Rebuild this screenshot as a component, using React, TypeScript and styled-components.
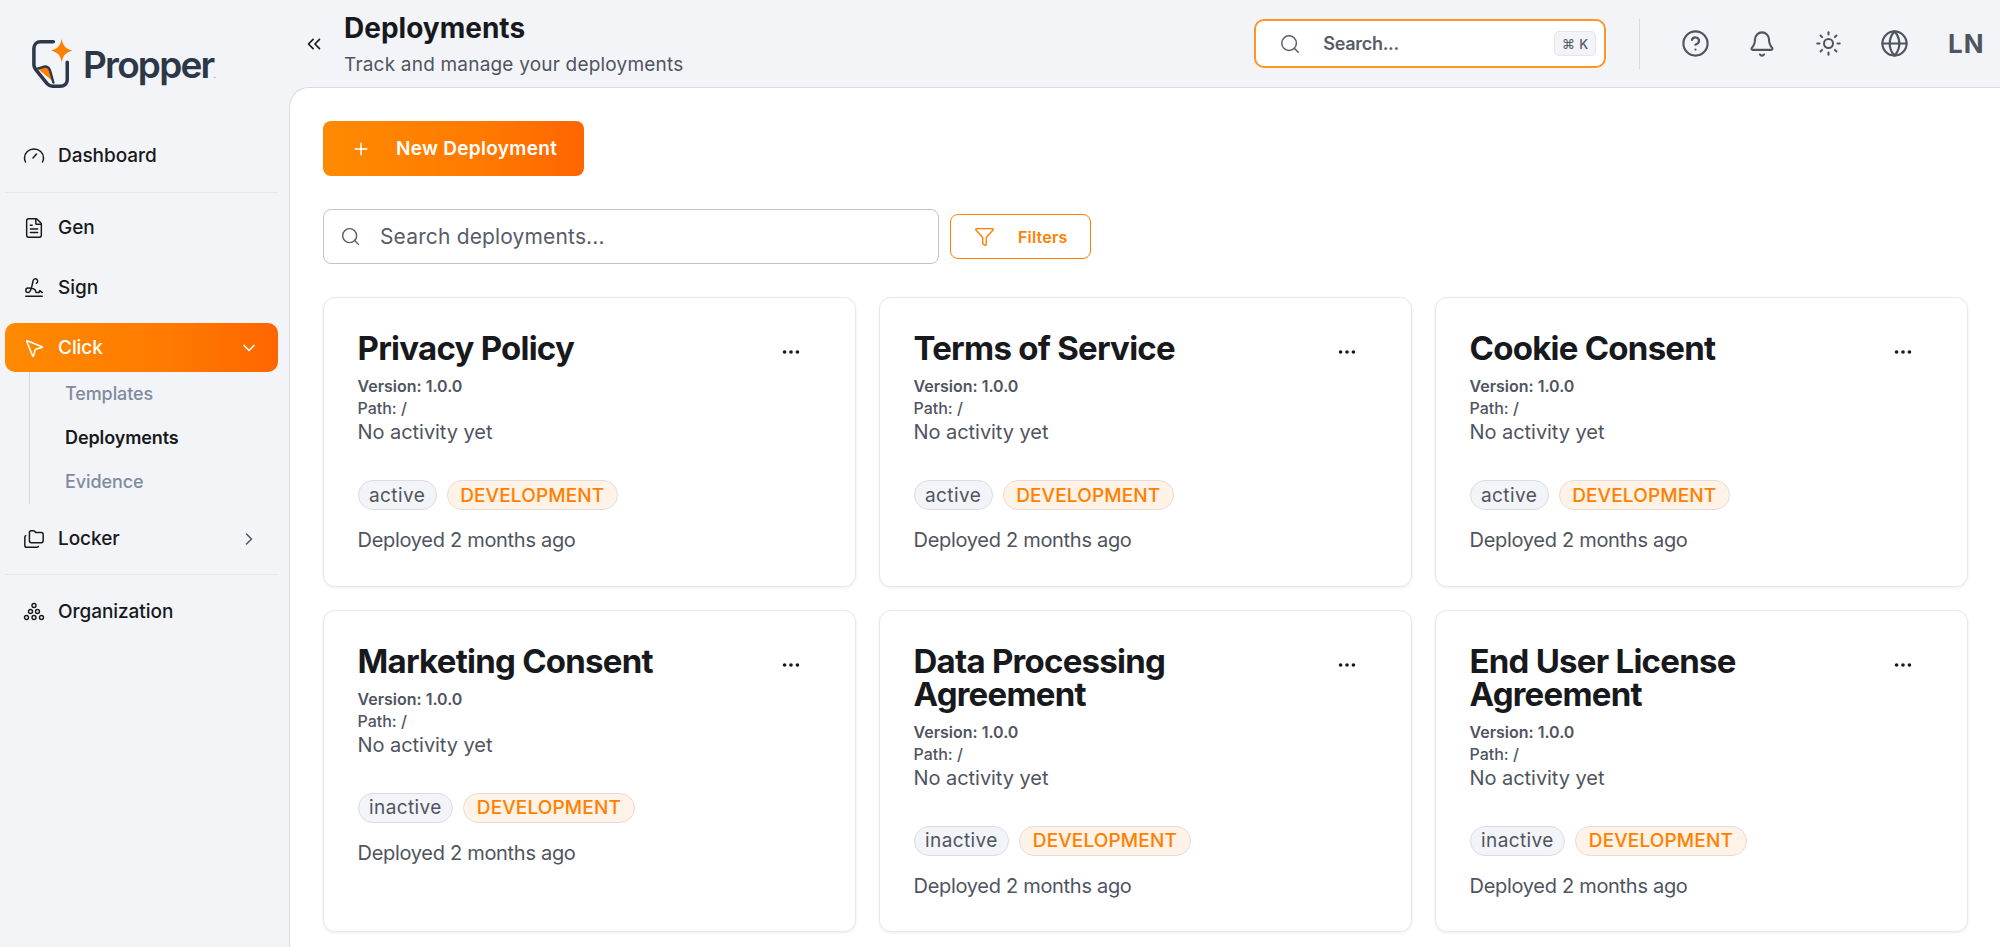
import * as React from "react";
import styled, { createGlobalStyle } from "styled-components";
import {
  Bell,
  ChevronDown,
  ChevronRight,
  ChevronsLeft,
  CircleHelp,
  Ellipsis,
  FileText,
  Folders,
  Funnel,
  Globe,
  MousePointer2,
  Plus,
  Search,
  Signature,
  Sun,
} from "lucide-react";

const ORANGE = "#ff7f00";
const INK = "#18191c";
const GREY = "#4f5461";
const FONT = `Inter, "Noto Sans", "Liberation Sans", sans-serif`;

const GlobalStyle = createGlobalStyle`
  html, body {
    margin: 0;
    height: 100%;
    background: #f2f4f8;
    font-family: ${FONT};
  }
  * { box-sizing: border-box; }
`;

const Shell = styled.div`
  display: grid;
  grid-template-columns: 289px 1fr;
  height: 947px;
  overflow: hidden;
  background: #f2f4f8;
`;

const Sidebar = styled.aside`
  display: flex;
  flex-direction: column;
  padding: 0 11px 0 5px;
`;

const LogoRow = styled.div`
  display: flex;
  align-items: center;
  height: 128px;
  padding-left: 26px;
  gap: 11px;
`;

const LogoText = styled.span`
  font-size: 37px;
  font-weight: 600;
  letter-spacing: -1.8px;
  color: #2c3848;
  small {
    font-size: 8px;
    color: #9aa1ad;
    letter-spacing: 0;
  }
`;

const NavItem = styled.div<{ $active?: boolean; $gap?: number }>`
  display: flex;
  align-items: center;
  height: 49px;
  padding: 0 19px 0 17px;
  margin-top: ${(p) => p.$gap ?? 0}px;
  border-radius: 10px;
  font-size: 19px;
  font-weight: 500;
  letter-spacing: -0.05px;
  color: ${(p) => (p.$active ? "#fff" : INK)};
  background: ${(p) =>
    p.$active ? "linear-gradient(90deg, #ff8a00 0%, #ff7a00 60%, #ff6500 100%)" : "transparent"};
`;

const NavIcon = styled.span`
  display: flex;
  width: 24px;
  margin-right: 12px;
  justify-content: center;
`;

const NavLabel = styled.span`
  flex: 1;
`;

const NavDivider = styled.div<{ $gap: number; $after: number }>`
  height: 1px;
  background: #e5e7ec;
  margin: ${(p) => p.$gap}px 0 ${(p) => p.$after}px;
`;

const SubNav = styled.div`
  display: flex;
  flex-direction: column;
  gap: 2px;
  margin-left: 24px;
  padding-left: 35px;
  border-left: 1px solid #d3d6dd;
  height: 132px;
`;

const SubItem = styled.div<{ $current?: boolean }>`
  height: 42px;
  display: flex;
  align-items: center;
  font-size: 18px;
  font-weight: ${(p) => (p.$current ? 600 : 500)};
  letter-spacing: -0.1px;
  color: ${(p) => (p.$current ? INK : "#818a9e")};
`;

const Column = styled.div`
  display: flex;
  flex-direction: column;
  min-width: 0;
`;

const TopBar = styled.header`
  display: flex;
  align-items: center;
  height: 87px;
  flex: none;
`;

const CollapseButton = styled.span`
  display: flex;
  width: 55px;
  padding-left: 14px;
  color: ${INK};
`;

const TitleBlock = styled.div`
  flex: 1;
  margin-top: 3px;
`;

const PageTitle = styled.h1`
  margin: 0 0 5px;
  font-size: 28px;
  line-height: 34px;
  font-weight: 700;
  color: ${INK};
`;

const PageSubtitle = styled.div`
  font-size: 19px;
  line-height: 30px;
  letter-spacing: 0.2px;
  color: ${GREY};
`;

const GlobalSearch = styled.div`
  display: flex;
  align-items: center;
  width: 352px;
  height: 49px;
  padding: 0 8px 0 23px;
  background: #fff;
  border: 2px solid #ff9526;
  border-radius: 10px;
  color: #585c68;
  font-size: 18px;
  font-weight: 600;
  letter-spacing: -0.3px;
`;

const GlobalSearchText = styled.span`
  flex: 1;
  margin-left: 22px;
`;

const Kbd = styled.span`
  display: flex;
  align-items: center;
  justify-content: center;
  width: 42px;
  height: 25px;
  background: #f2f4f8;
  border: 1px solid #e3e5ea;
  border-radius: 5px;
  font-size: 13px;
  font-weight: 500;
  letter-spacing: 0.5px;
`;

const TopDivider = styled.div`
  width: 1px;
  height: 50px;
  background: #d6d9df;
  margin: 0 22.700px 0 32.800px;
`;

const TopIcons = styled.div`
  display: flex;
  align-items: center;
  color: #4f5460;
`;

const TopIconSlot = styled.span`
  display: flex;
  justify-content: center;
  width: 66.300px;
`;

const Initials = styled.span`
  width: 72px;
  padding-left: 20px;
  font-size: 26px;
  font-weight: 700;
  letter-spacing: 1px;
  color: #4f5460;
`;

const Panel = styled.main`
  flex: 1;
  padding: 33px 32px 0 33px;
  background: #fff;
  border-top: 1px solid #d9dce2;
  border-left: 1px solid #d9dce2;
  border-top-left-radius: 20px;
`;

const PrimaryButton = styled.button`
  display: flex;
  align-items: center;
  width: 261px;
  height: 55px;
  padding: 0 0 0 28px;
  gap: 25px;
  border: 0;
  border-radius: 8px;
  background: linear-gradient(90deg, #ff8a00 0%, #ff7a00 60%, #ff6500 100%);
  color: #fff;
  font-family: ${FONT};
  font-size: 19px;
  font-weight: 600;
  letter-spacing: 0.3px;
`;

const SearchRow = styled.div`
  display: flex;
  align-items: center;
  gap: 11px;
  margin: 33px 0 33px;
`;

const SearchBox = styled.div`
  display: flex;
  align-items: center;
  width: 616px;
  height: 55px;
  padding: 0 16px;
  gap: 19px;
  border: 1.500px solid #bfc3d3;
  border-radius: 8px;
  color: #585c68;
  font-size: 21px;
  letter-spacing: 0.15px;
`;

const FilterButton = styled.div`
  display: flex;
  align-items: center;
  width: 141px;
  height: 45px;
  padding-left: 23px;
  gap: 23px;
  border: 1.500px solid ${ORANGE};
  border-radius: 8px;
  color: ${ORANGE};
  font-size: 16px;
  font-weight: 600;
  letter-spacing: 0.2px;
`;

const CardGrid = styled.div`
  display: grid;
  grid-template-columns: repeat(3, 1fr);
  gap: 23px;
`;

const Card = styled.article`
  padding: 34px 33.500px 32.500px;
  background: #fff;
  border: 1.500px solid #e6e8ec;
  border-radius: 12px;
  box-shadow: 0 1px 3px rgba(20, 25, 40, 0.08);
`;

const CardHead = styled.div`
  display: flex;
  justify-content: space-between;
`;

const CardTitle = styled.h2`
  margin: 0;
  max-width: 300px;
  font-size: 33px;
  line-height: 33px;
  font-weight: 700;
  letter-spacing: -0.75px;
  color: ${INK};
`;

const MoreButton = styled.span`
  display: flex;
  width: 24px;
  height: 24px;
  margin: 8px 19px 0 0;
  flex: none;
  align-items: center;
  justify-content: center;
  color: ${INK};
`;

const Meta = styled.div`
  margin-top: 10px;
`;

const MetaLine = styled.div<{ $bold?: boolean }>`
  font-size: 16px;
  line-height: 22px;
  font-weight: ${(p) => (p.$bold ? 600 : 500)};
  color: ${GREY};
`;

const Activity = styled.div`
  font-size: 20px;
  line-height: 26px;
  letter-spacing: -0.05px;
  color: ${GREY};
`;

const Pills = styled.div`
  display: flex;
  gap: 10px;
  margin: 35px 0 17px;
`;

const Pill = styled.span<{ $env?: boolean }>`
  display: flex;
  align-items: center;
  height: 30px;
  padding: 0 ${(p) => (p.$env ? 12.5 : 10.5)}px;
  border: 1.500px solid ${(p) => (p.$env ? "#e3dcd8" : "#d9dce6")};
  border-radius: 15px;
  font-size: 19px;
  font-weight: ${(p) => (p.$env ? 500 : 400)};
  letter-spacing: ${(p) => (p.$env ? 0.15 : 0.4)}px;
  background: ${(p) => (p.$env ? "#fff2e7" : "#f2f4f8")};
  color: ${(p) => (p.$env ? ORANGE : GREY)};
`;

const Deployed = styled.div`
  font-size: 20px;
  line-height: 26px;
  letter-spacing: -0.3px;
  color: ${GREY};
`;

const Logo = () => (
  <svg width="41" height="50" viewBox="0 0 44 54" fill="none">
    <path
      d="M24 3H10C6 3 3 6 3 10V28C3 30 3.600 31 5 33L17 48C19 50 20.500 51 23 51H31C36 51 39 48 39 44V25"
      stroke="#2c3848"
      strokeWidth="3.800"
      strokeLinecap="round"
      strokeLinejoin="round"
    />
    <path d="M7 32L16 30C19 30 20 33 21 37L24 46Z" fill={ORANGE} />
    <path d="M7 32L14 30C18 29 20 32 21 36L24 47" stroke="#2c3848" strokeWidth="2.600" strokeLinecap="round" />
    <path
      d="M33 0C34.500 7 37 10.500 44.500 12.500C37 14.500 34.500 18 33 25C31.500 18 29 14.500 21.500 12.500C29 10.500 31.500 7 33 0Z"
      fill={ORANGE}
    />
  </svg>
);

const DashboardIcon = () => (
  <svg width="22" height="22" viewBox="0 0 22 22" fill="none" stroke="currentColor" strokeWidth="1.500" strokeLinecap="round">
    <path d="M2.500 17C1.800 15.700 1.500 14.400 1.500 13C1.500 7.800 5.800 4 11 4C16.200 4 20.500 7.800 20.500 13C20.500 14.400 20.200 15.700 19.500 17" />
    <path d="M10 13L13.500 9" />
  </svg>
);

const OrgIcon = () => (
  <svg width="22" height="22" viewBox="0 0 22 22" fill="none" stroke="currentColor" strokeWidth="1.400">
    <circle cx="11" cy="4.500" r="2" />
    <circle cx="7.500" cy="10.500" r="2" />
    <circle cx="14.500" cy="10.500" r="2" />
    <circle cx="3.500" cy="16.500" r="2" />
    <circle cx="11" cy="16.500" r="2" />
    <circle cx="18.500" cy="16.500" r="2" />
  </svg>
);

const deployments = [
  { name: "Privacy Policy", status: "active" },
  { name: "Terms of Service", status: "active" },
  { name: "Cookie Consent", status: "active" },
  { name: "Marketing Consent", status: "inactive" },
  { name: "Data Processing Agreement", status: "inactive" },
  { name: "End User License Agreement", status: "inactive" },
];

function DeploymentCard({ name, status }: { name: string; status: string }) {
  return (
    <Card>
      <CardHead>
        <CardTitle>{name}</CardTitle>
        <MoreButton>
          <Ellipsis size={22} strokeWidth={2} />
        </MoreButton>
      </CardHead>
      <Meta>
        <MetaLine $bold>Version: 1.0.0</MetaLine>
        <MetaLine>Path: /</MetaLine>
      </Meta>
      <Activity>No activity yet</Activity>
      <Pills>
        <Pill>{status}</Pill>
        <Pill $env>DEVELOPMENT</Pill>
      </Pills>
      <Deployed>Deployed 2 months ago</Deployed>
    </Card>
  );
}

export default function App() {
  return (
    <Shell>
      <GlobalStyle />
      <Sidebar>
        <LogoRow>
          <Logo />
          <LogoText>
            Propper<small>.</small>
          </LogoText>
        </LogoRow>
        <NavItem $gap={3}>
          <NavIcon>
            <DashboardIcon />
          </NavIcon>
          <NavLabel>Dashboard</NavLabel>
        </NavItem>
        <NavDivider $gap={12} $after={10} />
        <NavItem>
          <NavIcon>
            <FileText size={22} strokeWidth={1.6} />
          </NavIcon>
          <NavLabel>Gen</NavLabel>
        </NavItem>
        <NavItem $gap={11}>
          <NavIcon>
            <Signature size={22} strokeWidth={1.6} />
          </NavIcon>
          <NavLabel>Sign</NavLabel>
        </NavItem>
        <NavItem $active $gap={11}>
          <NavIcon>
            <MousePointer2 size={22} strokeWidth={1.7} />
          </NavIcon>
          <NavLabel>Click</NavLabel>
          <ChevronDown size={20} strokeWidth={2} />
        </NavItem>
        <SubNav>
          <SubItem>Templates</SubItem>
          <SubItem $current>Deployments</SubItem>
          <SubItem>Evidence</SubItem>
        </SubNav>
        <NavItem $gap={10}>
          <NavIcon>
            <Folders size={22} strokeWidth={1.6} />
          </NavIcon>
          <NavLabel>Locker</NavLabel>
          <ChevronRight size={20} strokeWidth={1.8} color="#4f5460" />
        </NavItem>
        <NavDivider $gap={11} $after={12} />
        <NavItem>
          <NavIcon>
            <OrgIcon />
          </NavIcon>
          <NavLabel>Organization</NavLabel>
        </NavItem>
      </Sidebar>
      <Column>
        <TopBar>
          <CollapseButton>
            <ChevronsLeft size={22} strokeWidth={1.8} />
          </CollapseButton>
          <TitleBlock>
            <PageTitle>Deployments</PageTitle>
            <PageSubtitle>Track and manage your deployments</PageSubtitle>
          </TitleBlock>
          <GlobalSearch>
            <Search size={22} strokeWidth={1.6} />
            <GlobalSearchText>Search...</GlobalSearchText>
            <Kbd>⌘ K</Kbd>
          </GlobalSearch>
          <TopDivider />
          <TopIcons>
            <TopIconSlot>
              <CircleHelp size={29} strokeWidth={1.8} />
            </TopIconSlot>
            <TopIconSlot>
              <Bell size={28} strokeWidth={1.8} />
            </TopIconSlot>
            <TopIconSlot>
              <Sun size={27} strokeWidth={1.8} />
            </TopIconSlot>
            <TopIconSlot>
              <Globe size={29} strokeWidth={1.8} />
            </TopIconSlot>
            <Initials>LN</Initials>
          </TopIcons>
        </TopBar>
        <Panel>
          <PrimaryButton>
            <Plus size={20} strokeWidth={1.8} />
            New Deployment
          </PrimaryButton>
          <SearchRow>
            <SearchBox>
              <Search size={21} strokeWidth={1.6} />
              Search deployments...
            </SearchBox>
            <FilterButton>
              <Funnel size={21} strokeWidth={1.6} />
              Filters
            </FilterButton>
          </SearchRow>
          <CardGrid>
            {deployments.map((d) => (
              <DeploymentCard key={d.name} name={d.name} status={d.status} />
            ))}
          </CardGrid>
        </Panel>
      </Column>
    </Shell>
  );
}
